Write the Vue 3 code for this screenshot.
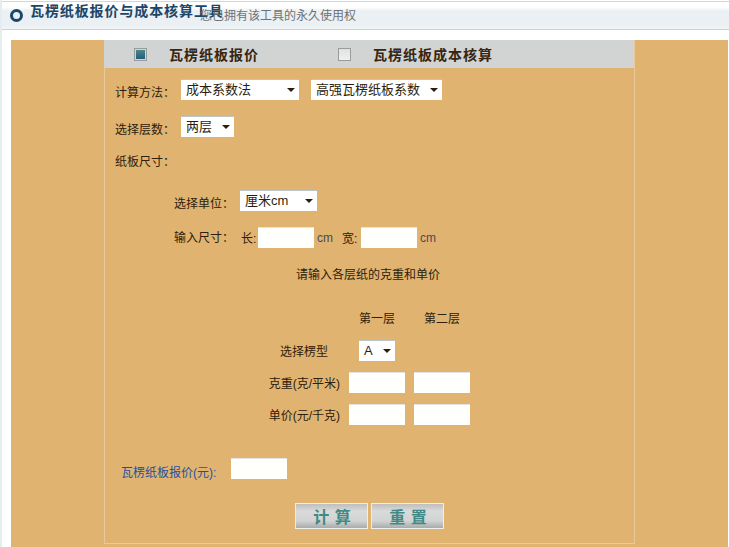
<template>
  <div class="page">
    <!-- 顶部标题 -->
    <div class="top-bar">
      <span class="ring"></span>
      <h1 class="top-title">瓦楞纸板报价与成本核算工具</h1>
      <span class="top-note">您已拥有该工具的永久使用权</span>
    </div>

    <div class="panel">
      <div class="sheet">
        <!-- 切换 -->
        <div class="tabs">
          <label class="tab tab-first">
            <span class="box on"></span>
            <span>瓦楞纸板报价</span>
          </label>
          <label class="tab tab-second">
            <span class="box"></span>
            <span>瓦楞纸板成本核算</span>
          </label>
        </div>

        <div class="row row-method">
          <span class="label">计算方法：</span>
          <span class="sel w118"><select><option>成本系数法</option></select></span>
          <span class="sel w131"><select><option>高强瓦楞纸板系数</option></select></span>
        </div>

        <div class="row row-layer">
          <span class="label">选择层数：</span>
          <span class="sel w53"><select><option>两层</option></select></span>
        </div>

        <div class="label row-size">纸板尺寸：</div>

        <div class="row row-unit">
          <span class="label">选择单位：</span>
          <span class="sel w77"><select><option>厘米cm</option></select></span>
        </div>

        <div class="row row-input">
          <span class="label">输入尺寸：</span>
          <span class="dim-label">长:</span>
          <input class="field" />
          <span class="unit">cm</span>
          <span class="dim-label second">宽:</span>
          <input class="field" />
          <span class="unit">cm</span>
        </div>

        <div class="note">请输入各层纸的克重和单价</div>

        <!-- 各层纸 -->
        <div class="layers">
          <span></span>
          <span class="head">第一层</span>
          <span class="head">第二层</span>

          <span class="name name-type">选择楞型</span>
          <span class="type-cell"><span class="sel w36"><select><option>A</option></select></span></span>
          <span></span>

          <span class="name">克重(克/平米)</span>
          <input class="field" />
          <input class="field" />

          <span class="name">单价(元/千克)</span>
          <input class="field" />
          <input class="field" />
        </div>

        <div class="row row-result">
          <span class="result-label">瓦楞纸板报价(元):</span>
          <input class="field" />
        </div>

        <div class="actions">
          <button class="btn">计 算</button>
          <button class="btn">重 置</button>
        </div>
      </div>
    </div>
  </div>
</template>

<script setup>
</script>

<style>
html,
body {
  margin: 0;
  background: #fff;
  overflow: hidden;
}
</style>

<style scoped>
.page {
  width: 730px;
  height: 547px;
  overflow: hidden;
  box-sizing: border-box;
  position: relative;
  background: #fff;
  font-family: "Liberation Sans", "Noto Sans CJK SC", sans-serif;
  font-size: 12px;
  color: #2e200c;
  border-right: 1px solid #d4dadb;
  border-left: 2px solid #e4eeef;
}

.top-bar {
  height: 29px;
  box-sizing: border-box;
  margin-top: 1px;
  border-top: 1px solid #d2d6d6;
  border-bottom: 1px solid #cdd2d3;
  background: linear-gradient(#fff 0, #fff 5px, #eaf0f3 9px, #eaf0f3 22px, #f1f5f6 100%);
  display: flex;
  align-items: flex-start;
  padding-left: 8px;
  position: relative;
}

.ring {
  width: 13px;
  height: 13px;
  box-sizing: border-box;
  border: 3px solid #17476a;
  border-radius: 50%;
  margin-top: 7px;
}

.top-title {
  margin: 0 0 0 7px;
  font-size: 14px;
  letter-spacing: 0.9px;
  line-height: 16px;
  font-family: "Noto Sans CJK SC", sans-serif;
  font-weight: 700;
  color: #1b4668;
}

.top-note {
  position: absolute;
  left: 198px;
  top: 6px;
  font-size: 12px;
  line-height: 16px;
  color: #6f7273;
}

.panel {
  margin: 10px 1px 0 9px;
  background: #e0b470;
  height: 507px;
  padding: 0 93px;
}

.sheet {
  height: 504px;
  box-sizing: border-box;
  border-left: 1px solid #e8c99a;
  border-right: 1px solid #e8c99a;
  border-bottom: 1px solid #d9cdb8;
}

.tabs {
  height: 28px;
  background: #d2d4d3;
  display: flex;
  align-items: center;
  margin-left: -1px;
  font-family: "Noto Sans CJK SC", sans-serif;
  font-size: 14px;
  font-weight: 700;
  letter-spacing: 1px;
  color: #38260f;
}

.tab {
  display: flex;
  align-items: center;
}

.tab-first {
  margin-left: 30px;
  width: 204px;
  gap: 22px;
}

.tab-second {
  gap: 22px;
}

.box {
  width: 13px;
  height: 13px;
  box-sizing: border-box;
  border: 1px solid #9a9c9c;
  background: linear-gradient(#dfe2e2, #eef0f0);
}

.box.on {
  background: linear-gradient(#4d8c8a, #1d5a7c);
  box-shadow: inset 0 0 0 1px #cfd5d5;
}

.row {
  display: flex;
  align-items: center;
}

.label {
  line-height: 16px;
}

.row-method {
  margin: 11px 0 0 10px;
}

.row-layer {
  margin-top: 16px;
  margin-left: 10px;
}

.row-size {
  margin: 17px 0 0 10px;
}

.row-unit {
  margin: 20px 0 0 69px;
}

.row-input {
  margin: 16px 0 0 69px;
}

.row-method .label,
.row-layer .label,
.row-unit .label {
  width: 66px;
  position: relative;
  top: 3px;
}

.row-input .label {
  width: 67px;
}

.sel {
  display: inline-block;
  position: relative;
  height: 21px;
  background: #fff;
  border-top: 1px solid #bcc4c8;
  box-sizing: border-box;
  margin-right: 12px;
}

.sel::after {
  content: "";
  position: absolute;
  right: 4px;
  top: 8px;
  border-left: 4px solid transparent;
  border-right: 4px solid transparent;
  border-top: 4px solid #2c1e0c;
  pointer-events: none;
}

.sel select {
  appearance: none;
  display: block;
  width: 100%;
  height: 19px;
  border: 0;
  background: transparent;
  padding: 0 0 0 5px;
  font: inherit;
  font-size: 13px;
  line-height: 18px;
  color: #2c1e0c;
}

.w118 { width: 118px; }
.w131 { width: 131px; margin-right: 0; }
.w53 { width: 53px; }
.w77 { width: 77px; }
.w36 { width: 36px; margin-right: 0; }

.field {
  width: 56px;
  height: 21px;
  box-sizing: border-box;
  border: 0;
  border-top: 1px solid #e3e3e3;
  background: #fffffb;
  padding: 0;
  margin: 0;
}

.dim-label {
  width: 17px;
}

.dim-label.second {
  width: 19px;
}

.unit {
  width: 28px;
  padding-left: 3px;
  box-sizing: border-box;
  color: #4a4a55;
  font-size: 12px;
}

.note {
  margin: 17px 0 0 191px;
  line-height: 20px;
}

.layers {
  display: grid;
  grid-template-columns: 235px 56px 56px;
  column-gap: 9px;
  grid-template-rows: 21px 21px 21px 21px;
  row-gap: 11px;
  margin-top: 23px;
  align-items: center;
  width: 365px;
}

.head {
  text-align: center;
  line-height: 20px;
}

.name {
  text-align: right;
  white-space: nowrap;
}

.name-type {
  padding-right: 12px;
}

.type-cell {
  padding-left: 10px;
  height: 21px;
}

.row-result {
  margin: 33px 0 0 16px;
}

.result-label {
  width: 110px;
  color: #2650a0;
  white-space: nowrap;
  position: relative;
  top: 3px;
}

.actions {
  display: flex;
  gap: 3px;
  margin: 24px 0 0 190px;
}

.btn {
  width: 73px;
  height: 26px;
  padding: 0 0 0 2px;
  border: 1px solid #efeee9;
  background: linear-gradient(#bdbfbe 0, #d9dad9 30%, #d2d4d3 70%, #a9abaa 100%);
  font-family: "Noto Sans CJK SC", sans-serif;
  font-size: 16px;
  font-weight: 700;
  letter-spacing: 1px;
  color: #3f8a86;
}
</style>
